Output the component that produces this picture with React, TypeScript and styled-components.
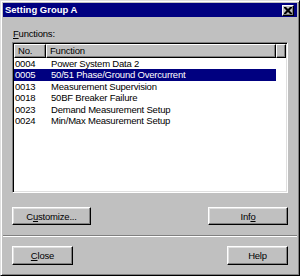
import styled, {createGlobalStyle} from "styled-components";

const GlobalStyle = createGlobalStyle`
    html, body {
        margin: 0;
        padding: 0;
        background: #c0c0c0;
    }
    body {
        font-family: "Liberation Sans", Arial, sans-serif;
        font-size: 9.5px;
        letter-spacing: -0.2px;
        color: #000;
    }
`;

type FunctionRow = {
    no: string
    name: string
}

const rows: FunctionRow[] = [
    {no: "0004", name: "Power System Data 2"},
    {no: "0005", name: "50/51 Phase/Ground Overcurrent"},
    {no: "0013", name: "Measurement Supervision"},
    {no: "0018", name: "50BF Breaker Failure"},
    {no: "0023", name: "Demand Measurement Setup"},
    {no: "0024", name: "Min/Max Measurement Setup"},
];

export default function App() {
    const selected = "0005";

    return (
        <>
            <GlobalStyle/>
            <StyledWindow>
                <StyledTitleBar>
                    <StyledTitle>Setting Group A</StyledTitle>
                    <StyledCloseBox>
                        <svg width="8" height="7" viewBox="0 0 8 7">
                            <path d="M0 0h2l2 2 2-2h2v1L5.5 3.5 8 6v1H6L4 5 2 7H0V6l2.5-2.5L0 1z" fill="#000"/>
                        </svg>
                    </StyledCloseBox>
                </StyledTitleBar>

                <StyledBody>
                    <StyledLabel><u>F</u>unctions:</StyledLabel>
                    <StyledList>
                        <StyledHeader>
                            <StyledHeaderCell $width={32}>No.</StyledHeaderCell>
                            <StyledHeaderCell $width={230}>Function</StyledHeaderCell>
                            <StyledHeaderCell $width={10}/>
                        </StyledHeader>
                        {rows.map(row => (
                            <StyledRow key={row.no} $selected={row.no === selected}>
                                <StyledNoCell>{row.no}</StyledNoCell>
                                <StyledNameCell>{row.name}</StyledNameCell>
                            </StyledRow>
                        ))}
                    </StyledList>
                    <StyledButtonRow>
                        <StyledButton $width={79}>C<u>u</u>stomize...</StyledButton>
                        <StyledButton $width={80}>Inf<u>o</u></StyledButton>
                    </StyledButtonRow>
                </StyledBody>

                <StyledSeparator/>

                <StyledFooter>
                    <StyledButton $width={61} $height={19}><u>C</u>lose</StyledButton>
                    <StyledButton $width={61} $height={19}>Help</StyledButton>
                </StyledFooter>
            </StyledWindow>
        </>
    )
}

const StyledWindow = styled.div`
    width: 300px;
    height: 276px;
    box-sizing: border-box;
    padding: 2px;
    border: 1px solid;
    border-color: #dfdfdf #000 #000 #dfdfdf;
    box-shadow: inset 1px 1px #fff, inset -1px -1px #808080;
    background: #c0c0c0;
    display: flex;
    flex-direction: column;
`;

const StyledTitleBar = styled.div`
    height: 14px;
    background-color: #000080;
    display: flex;
    align-items: center;
    justify-content: space-between;
    padding: 0 3px 0 2px;
`;

const StyledTitle = styled.span`
    color: #fff;
    font-weight: bold;
    letter-spacing: 0;
    line-height: 14px;
`;

const StyledCloseBox = styled.div`
    width: 12px;
    height: 11px;
    box-sizing: border-box;
    background: #c0c0c0;
    border: 1px solid;
    border-color: #fff #000 #000 #fff;
    box-shadow: inset -1px -1px #808080;
    display: flex;
    align-items: center;
    justify-content: center;
`;

const StyledBody = styled.div`
    padding: 11px 9px 0 9px;
    display: flex;
    flex-direction: column;
`;

const StyledLabel = styled.div`
    height: 12px;
    line-height: 12px;
    margin-bottom: 2px;
    padding-left: 1px;
`;

const StyledList = styled.div`
    height: 151px;
    box-sizing: border-box;
    background: #fff;
    border: 1px solid;
    border-color: #808080 #fff #fff #808080;
    box-shadow: inset 1px 1px #000, inset -1px -1px #dfdfdf;
    padding: 1px;
    display: flex;
    flex-direction: column;
`;

const StyledHeader = styled.div`
    display: flex;
    height: 14px;
    flex-shrink: 0;
`;

const StyledHeaderCell = styled.div<{ $width: number }>`
    width: ${p => p.$width}px;
    box-sizing: border-box;
    background: #c0c0c0;
    border: 1px solid;
    border-color: #fff #000 #000 #fff;
    box-shadow: inset -1px -1px #808080;
    padding-left: 3px;
    line-height: 12px;
    white-space: nowrap;
    overflow: hidden;
`;

const StyledRow = styled.div<{ $selected: boolean }>`
    display: grid;
    grid-template-columns: 32px 230px;
    height: 11.4px;
    line-height: 11.4px;
    width: 262px;
    background: ${p => p.$selected ? "#000080" : "transparent"};
    color: ${p => p.$selected ? "#fff" : "#000"};
`;

const StyledNoCell = styled.span`
    padding-left: 1px;
`;

const StyledNameCell = styled.span`
    padding-left: 5px;
    white-space: nowrap;
`;

const StyledButtonRow = styled.div`
    display: flex;
    justify-content: space-between;
    margin-top: 14px;
`;

const StyledButton = styled.button<{ $width: number, $height?: number }>`
    width: ${p => p.$width}px;
    height: ${p => p.$height ?? 18}px;
    box-sizing: border-box;
    padding: 0;
    background: #c0c0c0;
    border: 1px solid;
    border-color: #fff #000 #000 #fff;
    box-shadow: inset -1px -1px #808080, inset 1px 1px #dfdfdf;
    font-family: "Liberation Sans", Arial, sans-serif;
    font-size: 9.5px;
    letter-spacing: -0.2px;
    color: #000;
    cursor: pointer;
`;

const StyledSeparator = styled.div`
    margin-top: 10px;
    border-top: 1px solid #808080;
    border-bottom: 1px solid #fff;
`;

const StyledFooter = styled.div`
    display: flex;
    justify-content: space-between;
    padding: 9px 9px 0 9px;
`;
